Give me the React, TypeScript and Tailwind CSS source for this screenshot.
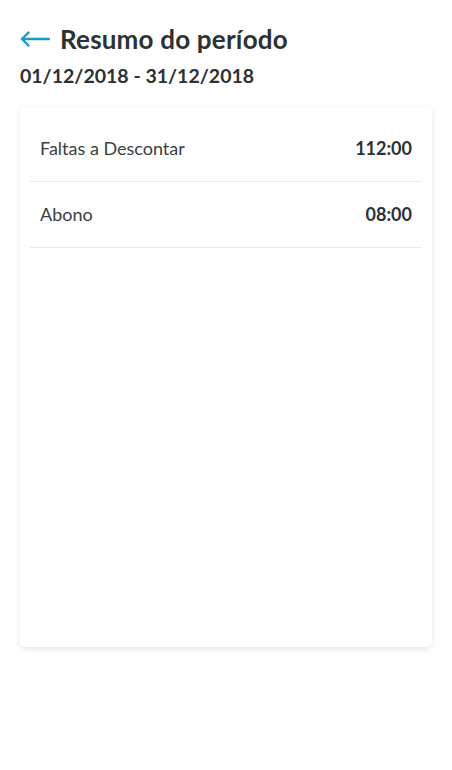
const rows = [
  { label: "Faltas a Descontar", value: "112:00" },
  { label: "Abono", value: "08:00" },
];

export default function App() {
  return (
    <div className="min-h-[770px] w-[452px] bg-white px-5 pt-5 font-['Lato','Noto_Sans',sans-serif] text-[#2b3134]">
      <div className="flex h-[38px] items-center gap-[10px]">
        <svg width="30" height="16" viewBox="0 0 30 16" fill="none" stroke="#1d9ac3" strokeWidth="2.4" strokeLinecap="round" strokeLinejoin="round">
          <path d="M29 8H2" />
          <path d="M8.5 1.5L2 8l6.5 6.5" />
        </svg>
        <h1 className="text-[26px] font-bold tracking-[0.2px]">Resumo do período</h1>
      </div>
      <div className="mt-[2px] text-[19.5px] font-bold leading-[32px]">01/12/2018 - 31/12/2018</div>
      <div className="mt-[15px] h-[540px] rounded-[5px] bg-white px-[10px] pt-[9px] shadow-[0_2px_6px_rgba(30,60,90,0.13)]">
        {rows.map((r) => (
          <div key={r.label} className="flex h-[66px] items-center justify-between border-b border-[#e8ecee] px-[10px] text-[18px]">
            <span className="text-[#3a4043]">{r.label}</span>
            <span className="font-bold">{r.value}</span>
          </div>
        ))}
      </div>
    </div>
  );
}
